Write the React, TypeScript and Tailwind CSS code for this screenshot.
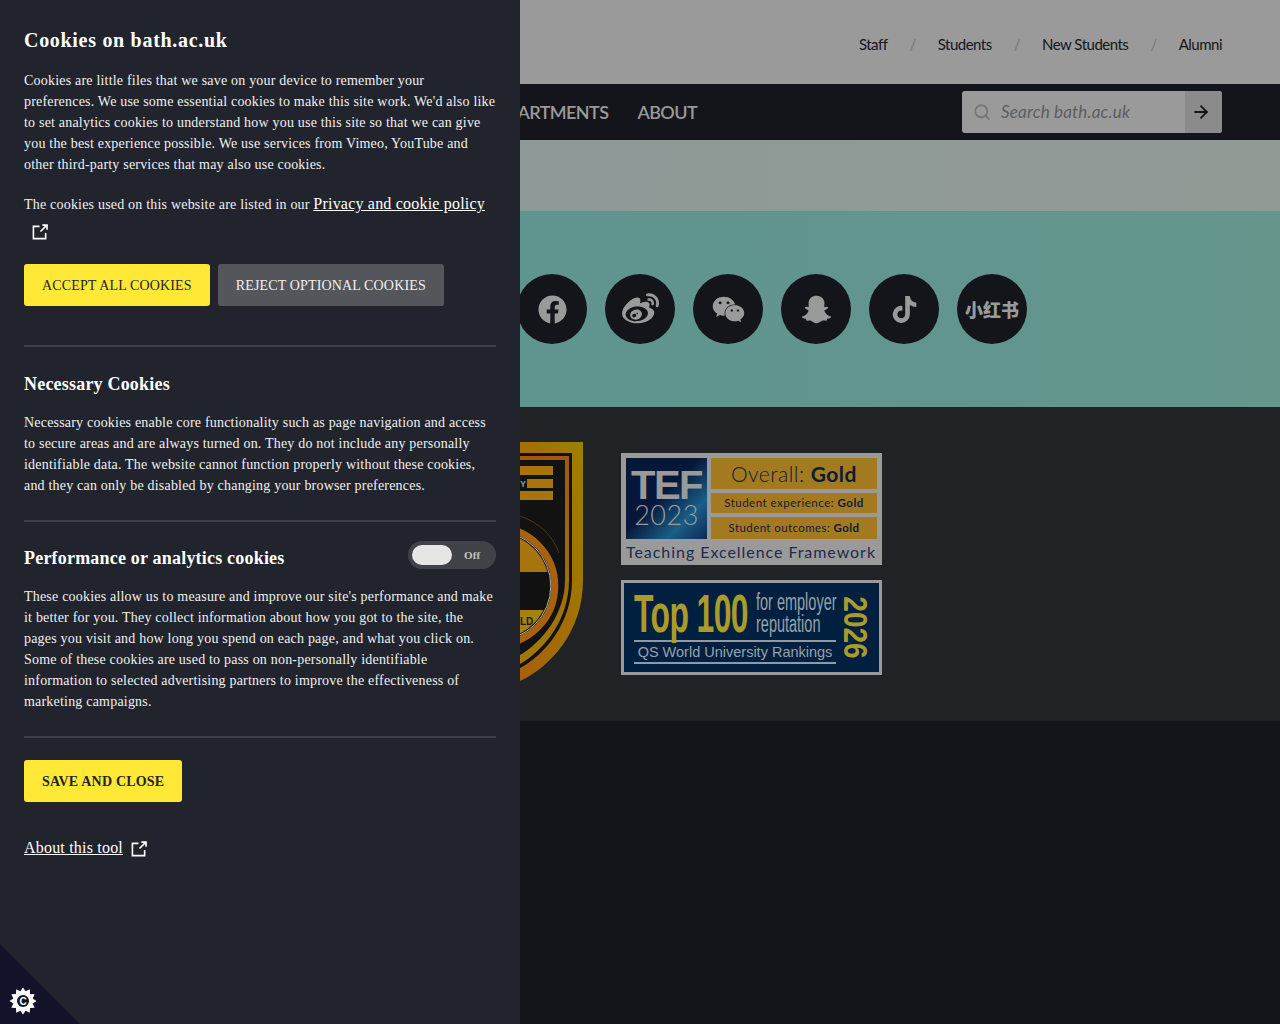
import { FaFacebook, FaWeibo, FaWeixin, FaSnapchatGhost, FaTiktok } from 'react-icons/fa';
import { ArrowRight, Search } from 'lucide-react';

const topLinks = ['Staff', 'Students', 'New Students', 'Alumni'];

// 12 point star behind the cookie control C
const starPoints = Array.from({ length: 24 }, (_, i) => {
  const r = i % 2 === 0 ? 13.5 : 10;
  const a = (i * Math.PI) / 12;
  return `${(23 + r * Math.sin(a)).toFixed(2)},${(57 - r * Math.cos(a)).toFixed(2)}`;
}).join(' ');

function ExternalIcon() {
  return (
    <svg width="16" height="16" viewBox="0 0 17 17" fill="none" stroke="#fff" strokeWidth="1.7" className="inline-block">
      <path d="M8 2.5H1.5v13h13v-6" />
      <path d="M9 8 15.5 1.5M11 1.2h5v5" />
    </svg>
  );
}

function Shield() {
  return (
    <svg width="63" height="240" viewBox="0 0 63 240" className="ml-[520px] mt-[35px] shrink-0">
      <defs>
        <linearGradient id="gold" x1="0" y1="1" x2="1" y2="0">
          <stop offset="0" stopColor="#a85f0c" />
          <stop offset="1" stopColor="#9c8000" />
        </linearGradient>
        <linearGradient id="ring" x1="0" y1="0" x2="0" y2="1">
          <stop offset="0" stopColor="#a5560f" />
          <stop offset="1" stopColor="#a07a08" />
        </linearGradient>
        <clipPath id="inner">
          <circle cx="-23.7" cy="144" r="53" />
        </clipPath>
      </defs>
      <path d="M0 0H63V138C63 190 30 225 0 239Z" fill="url(#gold)" />
      <path d="M0 11H52V138C52 180 26 212 0 226Z" fill="#111" />
      <path d="M0 14H49V138C49 178 24 208 0 222Z" fill="url(#ring)" />
      <path d="M0 18H45V138C45 172 22 200 0 213Z" fill="#121212" />
      <path d="M0 24H33V33H0ZM7 37H33V46H7ZM0 49H33V58H0Z" fill="#a8740e" />
      <text x="0" y="45" fontSize="9" fontWeight="700" fill="#9a9a9a" fontFamily="Liberation Sans, sans-serif">Y</text>
      <path d="M0 74C20 81 33 94 39 111" fill="none" stroke="#7a5210" strokeWidth="0.6" />
      <circle cx="-23.7" cy="144" r="58.5" fill="none" stroke="#a8620e" strokeWidth="7" />
      <circle cx="-23.7" cy="144" r="54.5" fill="#111" stroke="#b0b0b0" strokeWidth="1" />
      <g clipPath="url(#inner)">
        <rect x="-5" y="85" width="40" height="45" fill="#a8740e" />
        <rect x="-5" y="168" width="40" height="40" fill="#a8800e" />
      </g>
      <text x="0" y="183" fontSize="10" fontWeight="700" fill="#1b1b1b" fontFamily="Liberation Sans, sans-serif">LD</text>
    </svg>
  );
}

function TefBadge() {
  return (
    <div className="w-[261px] h-[112px] bg-[#9a9a9a] px-[5px] pt-[5px] font-['Lato',sans-serif]">
      <div className="flex gap-1">
        <div className="w-[81px] h-[81px] pt-[10px] bg-[linear-gradient(135deg,#07173a_45%,#1a5f86_75%,#0c2a55)] flex flex-col items-center text-[#9a9a9a] leading-none">
          <span className="text-[40px] font-bold tracking-[-1.5px] h-[35px] leading-[35px] font-['Liberation_Sans',sans-serif]">TEF</span>
          <span className="text-[27px] font-light -mt-[2px] h-[26px] tracking-[0.5px]">2023</span>
        </div>
        <div className="flex-1 flex flex-col text-[#0d1a3d]">
          <div className="h-[31px] bg-[#a37a20] flex items-center justify-center text-[21px] tracking-[0.5px] font-light">Overall:&nbsp;<b className="font-bold">Gold</b></div>
          <div className="mt-[4px] h-[20px] bg-[#a37a20] flex items-center justify-center text-[11.5px] tracking-[0.5px]">Student experience:&nbsp;<b>Gold</b></div>
          <div className="mt-[4px] h-[22px] bg-[#a37a20] flex items-center justify-center text-[11.5px] tracking-[0.4px]">Student outcomes:&nbsp;<b>Gold</b></div>
        </div>
      </div>
      <div className="text-[16px] leading-[26px] text-[#1d2b4a] whitespace-nowrap tracking-[0.95px]">Teaching Excellence Framework</div>
    </div>
  );
}

function QsBadge() {
  return (
    <div className="w-[261px] h-[95px] bg-[#012040] border-[3px] border-[#9a9a9a] mt-[15px] pl-[10px] pr-[8px] pt-[9px] flex gap-[7px] font-['Liberation_Sans',sans-serif]">
      <div className="w-[202px]">
        <div className="h-[42px] flex items-center">
          <span className="text-[#ab9b2b] text-[54px] font-bold leading-none w-[114px] scale-x-[0.59] origin-left whitespace-nowrap tracking-[-1px]">Top 100</span>
          <div className="ml-[8px] text-[#98a1ab] text-[23px] leading-[22px] scale-x-[0.63] origin-left whitespace-nowrap">for employer<br />reputation</div>
        </div>
        <div className="mt-[6px] border-y-2 border-[#8f9aa6] text-center text-[#98a1ab] text-[14.5px] leading-[20px] h-[24px] whitespace-nowrap">QS World University Rankings</div>
      </div>
      <div className="w-[26px] h-[70px] flex items-center justify-center">
        <span className="rotate-90 text-[#ab9b2b] text-[33px] font-bold leading-none scale-x-[0.85]">2026</span>
      </div>
    </div>
  );
}

function Site() {
  return (
    <div className="min-h-[1024px] bg-[#14151a] font-['Lato',sans-serif]">
      <header className="h-[84px] bg-[#9a9a9a] flex items-center justify-end pr-[58px] text-[#15161a] text-[15px] tracking-[-0.5px] pt-[4px]">
        {topLinks.map((l, i) => (
          <div key={l} className="flex items-center">
            {i > 0 && <span className="mx-[22px] text-[#77787a]">/</span>}
            <span>{l}</span>
          </div>
        ))}
      </header>
      <nav className="h-14 bg-[#14151a] flex items-center pr-[58px] overflow-hidden">
        <div className="flex-1 flex justify-end gap-[29px] pr-[265px] text-[#9a9a9a] text-[18px] tracking-[-0.6px] font-semibold">
          <span>DEPARTMENTS</span>
          <span>ABOUT</span>
        </div>
        <div className="w-[260px] h-[42px] bg-[#9a9a9a] rounded-[3px] flex items-center overflow-hidden">
          <Search size={18} strokeWidth={2.5} className="ml-[11px] text-[#77787a]" />
          <span className="ml-[10px] flex-1 italic text-[#5c5d60] text-[17px] tracking-[0.2px]">Search bath.ac.uk</span>
          <span className="w-[37px] h-full bg-[#8b8b8b] flex items-center justify-center pr-[5px] text-[#14151a]">
            <ArrowRight size={20} strokeWidth={2.2} />
          </span>
        </div>
      </nav>
      <div className="h-[71px] bg-[linear-gradient(100deg,#8b9a98,#929a96)]" />
      <section className="h-[196px] bg-[linear-gradient(90deg,#5b9490,#64968c)] flex items-center pl-[517px] gap-[18px]">
        <span className="w-[70px] h-[70px] rounded-full bg-[#14151a] flex items-center justify-center text-[#9a9a9a]"><FaFacebook size={29} /></span>
        <span className="w-[70px] h-[70px] rounded-full bg-[#14151a] flex items-center justify-center text-[#9a9a9a]"><FaWeibo size={37} /></span>
        <span className="w-[70px] h-[70px] rounded-full bg-[#14151a] flex items-center justify-center text-[#9a9a9a]"><FaWeixin size={33} /></span>
        <span className="w-[70px] h-[70px] rounded-full bg-[#14151a] flex items-center justify-center text-[#9a9a9a]"><FaSnapchatGhost size={29} /></span>
        <span className="w-[70px] h-[70px] rounded-full bg-[#14151a] flex items-center justify-center text-[#9a9a9a]"><FaTiktok size={27} /></span>
        <span className="w-[70px] h-[70px] rounded-full bg-[#14151a] flex items-center justify-center text-[#9a9a9a] text-[18px] font-black font-['Noto_Sans_CJK_SC',sans-serif] leading-none">小红书</span>
      </section>
      <footer className="h-[314px] bg-[#212226] flex">
        <Shield />
        <div className="ml-[38px] mt-[46px]">
          <TefBadge />
          <QsBadge />
        </div>
      </footer>
    </div>
  );
}

function CookiePanel() {
  return (
    <aside className="absolute inset-y-0 left-0 w-[520px] h-[1024px] bg-[#21242c] px-6 pt-6 text-white font-['Liberation_Serif',serif] text-[14px] tracking-[0.2px] leading-[21px] overflow-hidden">
      <h1 className="text-[20px] font-bold leading-8 tracking-[0.7px]">Cookies on bath.ac.uk</h1>
      <p className="mt-[14px] text-[#f0f0f0]">
        Cookies are little files that we save on your device to remember your preferences. We use some essential cookies to make this site work. We'd also like to set analytics cookies to understand how you use this site so that we can give you the best experience possible. We use services from Vimeo, YouTube and other third-party services that may also use cookies.
      </p>
      <p className="mt-[15px] h-[56px] leading-[28px] text-[#f0f0f0]">
        The cookies used on this website are listed in our <a className="underline text-[16px] tracking-[0.2px] text-white">Privacy and cookie policy</a>
        <span className="ml-2 inline-block -translate-y-[2px]"><ExternalIcon /></span>
      </p>
      <div className="mt-[18px] flex gap-2">
        <button className="h-[42px] px-[18px] bg-[#ffe936] rounded-[3px] text-[#22252c] uppercase tracking-[0.15px]">Accept all cookies</button>
        <button className="h-[42px] px-[18px] bg-[#54565b] rounded-[3px] text-[#f0f0f0] uppercase tracking-[0.15px]">Reject optional cookies</button>
      </div>
      <hr className="mt-[39px] border-0 h-0.5 bg-[#3d4046]" />
      <h2 className="mt-[23px] text-[18px] font-bold leading-7">Necessary Cookies</h2>
      <p className="mt-[14px] text-[#f0f0f0]">
        Necessary cookies enable core functionality such as page navigation and access to secure areas and are always turned on. They do not include any personally identifiable data. The website cannot function properly without these cookies, and they can only be disabled by changing your browser preferences.
      </p>
      <hr className="mt-[24px] border-0 h-0.5 bg-[#3d4046]" />
      <div className="mt-[22px] flex items-start justify-between h-7">
        <h2 className="text-[18px] font-bold leading-7">Performance or analytics cookies</h2>
        <div className="-mt-[3px] w-[88px] h-7 rounded-full bg-[#3f4247] flex items-center pl-1">
          <span className="w-10 h-5 rounded-full bg-[#e6e6e6]" />
          <span className="ml-3 text-[11px] font-bold text-[#c4c4c4]">Off</span>
        </div>
      </div>
      <p className="mt-[14px] text-[#f0f0f0]">
        These cookies allow us to measure and improve our site's performance and make it better for you. They collect information about how you got to the site, the pages you visit and how long you spend on each page, and what you click on. Some of these cookies are used to pass on non-personally identifiable information to selected advertising partners to improve the effectiveness of marketing campaigns.
      </p>
      <hr className="mt-[24px] border-0 h-0.5 bg-[#3d4046]" />
      <button className="mt-[22px] h-[42px] px-[18px] bg-[#ffe936] rounded-[3px] text-[#22252c] uppercase font-bold block">Save and close</button>
      <p className="mt-[33px] text-[16px] leading-[26px]">
        <a className="underline">About this tool</a>
        <span className="ml-2"><ExternalIcon /></span>
      </p>
    </aside>
  );
}

function CookieToggle() {
  return (
    <svg width="80" height="80" viewBox="0 0 80 80" className="absolute left-0 bottom-0">
      <path d="M0 0 80 80H0Z" fill="#12132a" />
      <polygon points={starPoints} fill="#fff" />
      <circle cx="23" cy="57" r="6" fill="#12132a" />
      <text x="23" y="60.5" textAnchor="middle" fontSize="10" fontWeight="700" fill="#fff" fontFamily="Liberation Sans, sans-serif">C</text>
    </svg>
  );
}

export default function App() {
  return (
    <div className="relative w-[1280px] h-[1024px] overflow-hidden">
      <Site />
      <CookiePanel />
      <CookieToggle />
    </div>
  );
}
